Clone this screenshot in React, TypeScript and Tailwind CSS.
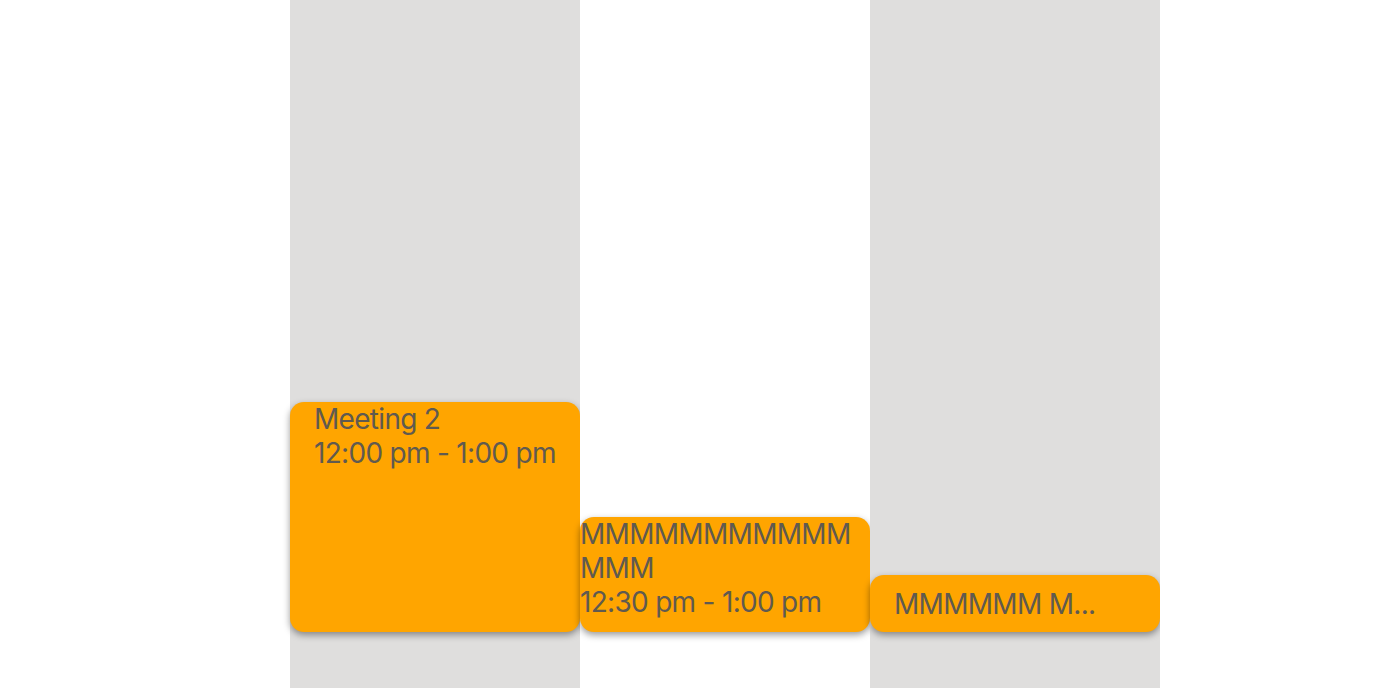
import React from "react";

type EventCardProps = {
  lines: string[];
  className?: string;
};

const EventCard = ({ lines, className }: EventCardProps) => {
  return (
    <div
      className={`rounded-[14px] bg-[#ffa500] text-[#605a50] text-[28px] leading-[34px] tracking-[-0.7px] shadow-[0_3px_7px_rgba(0,0,0,0.4)] ${className ?? ""}`}
    >
      {lines.map((line, i) => (
        <div key={i} className="[overflow-wrap:anywhere]">
          {line}
        </div>
      ))}
    </div>
  );
};

const Column = ({
  shaded,
  children,
}: {
  shaded?: boolean;
  children?: React.ReactNode;
}) => {
  return (
    <div
      className={`w-[290px] shrink-0 h-[688px] flex flex-col justify-end pb-[56px] ${
        shaded ? "bg-[#dfdedd]" : "bg-white"
      }`}
    >
      {children}
    </div>
  );
};

const App = () => {
  return (
    <div
      className="flex w-[1394px] h-[688px] overflow-hidden bg-white"
      style={{ fontFamily: "Inter, 'Noto Sans', sans-serif" }}
    >
      <Column />
      <Column shaded>
        <EventCard
          lines={["Meeting 2", "12:00 pm - 1:00 pm"]}
          className="h-[230px] px-6"
        />
      </Column>
      <Column>
        <EventCard
          lines={["MMMMMMMMMMMMMM", "12:30 pm - 1:00 pm"]}
          className="h-[115px]"
        />
      </Column>
      <Column shaded>
        <EventCard
          lines={["MMMMMM M..."]}
          className="h-[57px] px-6 flex flex-col justify-center"
        />
      </Column>
      <Column />
    </div>
  );
};

export default App;
